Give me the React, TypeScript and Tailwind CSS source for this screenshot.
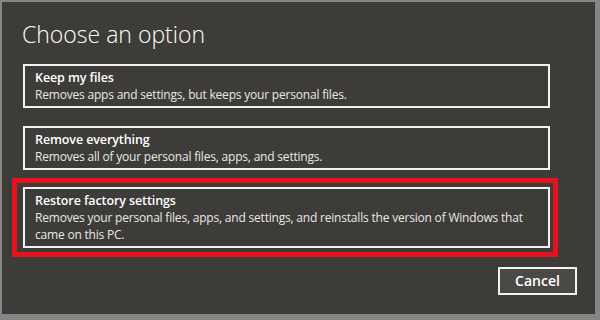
import React from "react";

interface OptionProps {
  title: string;
  description: string;
}

const Option = ({ title, description }: OptionProps) => {
  return (
    <div className="w-[527px] border-2 border-[#f2f2f2] pl-[10px] pr-[10px] pt-[3px] pb-[3px] text-white">
      <div className="text-[12.5px] leading-[17px] font-semibold tracking-[-0.1px]">{title}</div>
      <div className="text-[12px] leading-[17px] tracking-[-0.2px] text-[#e8e8e8]">{description}</div>
    </div>
  );
};

export default function App() {
  return (
    <div className="w-[600px] h-[320px] bg-[#858585] pt-[2px] pl-[2px] overflow-hidden">
      <div className="w-[593px] h-[312px] bg-[#3d3c38] pt-[17px] pl-[20px] pr-[18px] flex flex-col font-['Open_Sans','Noto_Sans',sans-serif]">
        <h1 className="text-[23px] leading-[30px] font-light text-white">Choose an option</h1>

        <div className="mt-[15px] pl-[1px] flex flex-col">
          <Option
            title="Keep my files"
            description="Removes apps and settings, but keeps your personal files."
          />
          <div className="mt-[18px]">
            <Option
              title="Remove everything"
              description="Removes all of your personal files, apps, and settings."
            />
          </div>
          {/* red highlight round the last option */}
          <div className="mt-[8px] -ml-[11px] w-[546px] border-[5px] border-[#e8121e] pl-[6px] pr-[3px] py-[4px]">
            <Option
              title="Restore factory settings"
              description="Removes your personal files, apps, and settings, and reinstalls the version of Windows that came on this PC."
            />
          </div>
        </div>

        <button className="mt-[10px] self-end w-[79px] h-[28px] border-2 border-[#f2f2f2] bg-[#4a4945] text-white text-[14px] font-semibold leading-none">
          Cancel
        </button>
      </div>
    </div>
  );
}
